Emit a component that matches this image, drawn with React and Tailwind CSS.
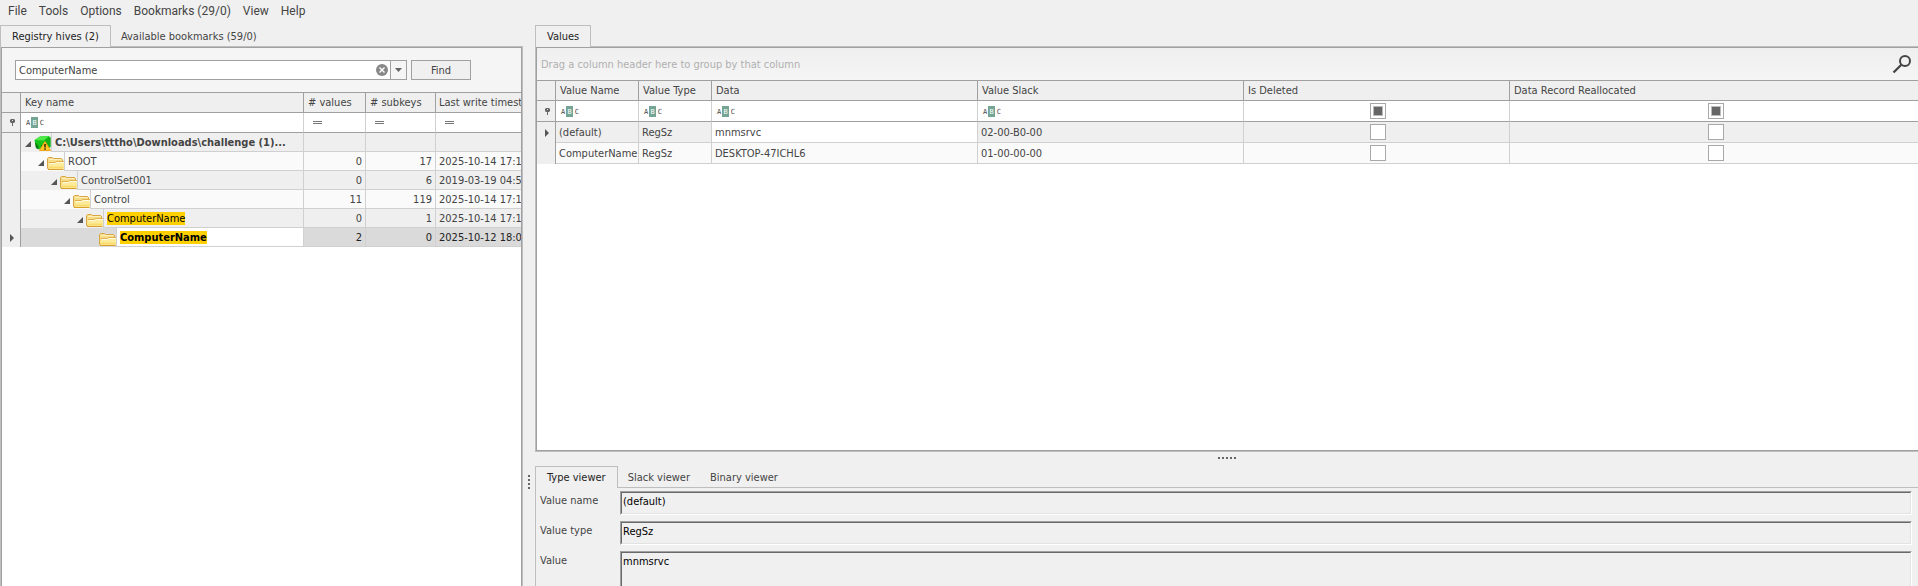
import React, { useEffect, useRef } from "react";

const treeRows = [
  { name: "C:\\Users\\tttho\\Downloads\\challenge (1)...", indent: "w-0", values: "", subkeys: "", time: "", icon: "hive", bold: true },
  { name: "ROOT", indent: "w-[13px]", values: "0", subkeys: "17", time: "2025-10-14 17:11:05", icon: "folder" },
  { name: "ControlSet001", indent: "w-[26px]", values: "0", subkeys: "6", time: "2019-03-19 04:52:10", icon: "folder" },
  { name: "Control", indent: "w-[39px]", values: "11", subkeys: "119", time: "2025-10-14 17:11:05", icon: "folder" },
  { name: "ComputerName", indent: "w-[52px]", values: "0", subkeys: "1", time: "2025-10-14 17:11:05", icon: "folder", hit: true },
  { name: "ComputerName", indent: "w-[65px]", values: "2", subkeys: "0", time: "2025-10-12 18:04:41", icon: "folder", hit: true, bold: true, selected: true, leaf: true },
];

const valueRows = [
  { name: "(default)", type: "RegSz", data: "mnmsrvc", slack: "02-00-B0-00", selected: true },
  { name: "ComputerName", type: "RegSz", data: "DESKTOP-47ICHL6", slack: "01-00-00-00" },
];

function Folder() {
  return (
    <svg className="block shrink-0" width="17" height="14" viewBox="0 0 17 14" aria-hidden="true">
      <path d="M0.5 12.5V2.5L1.5 1.5H5.5L6.5 2.5H14.5L15.5 3.5V12.5Z" fill="#f6dc86" stroke="#d8a545" />
      <path d="M2 3.5H14" stroke="#fdeebb" />
      <path d="M2 6.5H8.5L9.5 5.5H17V12L16 13.5H1.5Z" fill="#fdeb9c" />
      <path d="M2 6.5H8.5L9.5 5.5H17" stroke="#e0b050" fill="none" />
      <path d="M3 7.5H9L10 6.5H17" stroke="#fffbe0" fill="none" />
      <path d="M2 11.5H16.5" stroke="#fadb6e" strokeWidth="2" />
      <path d="M1 13.5H16.5" stroke="#d8a030" />
    </svg>
  );
}

function Hive() {
  return (
    <svg className="block shrink-0" width="17" height="15" viewBox="0 0 17 15" aria-hidden="true">
      <path d="M0.5 4L6 0.5L15 0L16.5 2V11L9 14.5L2 12Z" fill="#16c41a" />
      <path d="M0.5 4L6 0.5L15 0L10 4.5Z" fill="#4dea48" />
      <path d="M10 4.5L16.5 1V11L10 14.5Z" fill="#12b018" />
      <path d="M1 6L2 12L4.5 13.5V10ZM7 9V13.5H9V9Z" fill="#077a10" />
      <path d="M11 5.5L16.5 14.5H5.5Z" fill="#ffca2a" stroke="#f2a81a" />
      <path d="M11 8V11.5M11 12.3V13.8" stroke="#2b2100" strokeWidth="1.5" />
    </svg>
  );
}

function Expander() {
  return (
    <svg className="block" width="6" height="6" viewBox="0 0 6 6" aria-hidden="true">
      <path d="M6 0V6H0Z" fill="#555" />
    </svg>
  );
}

function RowArrow() {
  return (
    <svg className="mx-auto block" width="4" height="8" viewBox="0 0 4 8" aria-hidden="true">
      <path d="M0 0L4 4L0 8Z" fill="#555" />
    </svg>
  );
}

function Pin() {
  return (
    <svg className="mx-auto block" width="5" height="7" viewBox="0 0 5 7" aria-hidden="true">
      <path d="M1 0H4L5 1V3L4 4H3V7H2V4H1L0 3V1Z" fill="#666" />
      <rect x="2" y="1" width="1" height="1" fill="#ddd" />
    </svg>
  );
}

function AbcFilter({ label }) {
  return (
    <button type="button" aria-label={label} className="ml-[5px] flex h-[11px] font-['DejaVu_Sans_Mono',monospace] text-[7px] leading-[13px] text-[#444]">
      <span className="w-[5px] text-left">A</span>
      <span className="w-[7px] bg-[#74a594] text-center text-white">B</span>
      <span className="w-[6px] text-right">C</span>
    </button>
  );
}

function EqualsFilter({ label }) {
  return (
    <button type="button" aria-label={label} className="ml-[9px] block">
      <svg className="block" width="9" height="3" viewBox="0 0 9 3" aria-hidden="true">
        <path d="M0 0.5H9M0 2.5H9" stroke="#777" />
      </svg>
    </button>
  );
}

function Check({ label, mixed }) {
  const ref = useRef(null);
  useEffect(() => {
    ref.current.indeterminate = Boolean(mixed);
  }, [mixed]);
  return (
    <input
      ref={ref}
      type="checkbox"
      aria-label={label}
      className="mx-auto block size-4 appearance-none border border-[#a8a8a8] bg-white indeterminate:grid indeterminate:place-items-center indeterminate:before:size-[10px] indeterminate:before:border indeterminate:before:border-[#bbb] indeterminate:before:bg-[#666] indeterminate:before:content-['']"
    />
  );
}

function Tab({ active, children }) {
  return active ? (
    <button type="button" role="tab" aria-selected="true" className="relative z-10 -mb-px h-[22px] border border-b-0 border-[#bebebe] bg-[#f0f0f0] px-[11px] text-[#222]">
      {children}
    </button>
  ) : (
    <button type="button" role="tab" aria-selected="false" className="h-[21px] px-[10px] pt-px">
      {children}
    </button>
  );
}

const head = "h-5 border-r border-b border-[#a0a0a0] bg-[#efefef] px-1 pb-px text-left font-normal";
const gutter = "border-r border-[#a0a0a0] bg-[#efefef] p-0 pl-[2px]";

function Tree() {
  return (
    <table className="w-[620px] table-fixed border-separate border-spacing-0 border-t border-[#a0a0a0]">
      <colgroup>
        <col className="w-[19px]" />
        <col className="w-[283px]" />
        <col className="w-[62px]" />
        <col className="w-[70px]" />
        <col />
      </colgroup>
      <thead>
        <tr>
          <th className={head} aria-label="Row state" />
          <th className={head}>Key name</th>
          <th className={head}># values</th>
          <th className={head}># subkeys</th>
          <th className={head + " pl-[3px]"}>Last write timestamp</th>
        </tr>
        <tr>
          <td className={gutter + " h-5 border-b"}><Pin /></td>
          <td className="border-r border-b border-r-[#d0d0d0] border-b-[#a0a0a0] p-0"><AbcFilter label="Filter key name" /></td>
          <td className="border-r border-b border-r-[#d0d0d0] border-b-[#a0a0a0] p-0"><EqualsFilter label="Filter values" /></td>
          <td className="border-r border-b border-r-[#d0d0d0] border-b-[#a0a0a0] p-0"><EqualsFilter label="Filter subkeys" /></td>
          <td className="border-b border-[#a0a0a0] p-0"><EqualsFilter label="Filter timestamp" /></td>
        </tr>
      </thead>
      <tbody>
        {treeRows.map((r, i) => (
          <tr key={i} className={r.selected ? "bg-[#dadada] text-[#222]" : i % 2 ? "bg-[#fafafa]" : "bg-[#efefef]"}>
            <td className={gutter}>{r.selected && <RowArrow />}</td>
            <td className="border-r border-[#d0d0d0] p-0">
              <div className="flex h-[19px]">
                <div className={r.indent + " shrink-0"} />
                <div className="flex w-[13px] shrink-0 items-center justify-end pr-[3px] pt-[2px]">{!r.leaf && <Expander />}</div>
                <div className="flex shrink-0 items-end pb-px">{r.icon === "hive" ? <Hive /> : <Folder />}</div>
                <div className={"flex min-w-0 flex-1 items-center border-b border-l border-[#d0d0d0] pl-[3px] whitespace-nowrap " + (r.selected ? "bg-white" : "")}>
                  <span className={(r.hit ? "bg-[#ffd000] text-black " : "") + (r.bold ? "font-bold" : "")}>{r.name}</span>
                </div>
              </div>
            </td>
            <td className="border-r border-b border-[#d0d0d0] px-[3px] py-0 text-right">{r.values}</td>
            <td className="border-r border-b border-[#d0d0d0] px-[3px] py-0 text-right">{r.subkeys}</td>
            <td className="border-b border-[#d0d0d0] px-[3px] py-0 whitespace-nowrap">{r.time}</td>
          </tr>
        ))}
      </tbody>
    </table>
  );
}

function ValuesGrid() {
  const filterCell = "border-r border-b border-r-[#d0d0d0] border-b-[#a0a0a0] p-0";
  const cell = "h-[21px] border-r border-b border-[#d0d0d0] px-[3px] py-0";
  return (
    <table className="w-full table-fixed border-separate border-spacing-0 border-t border-[#a0a0a0]">
      <colgroup>
        <col className="w-[19px]" />
        <col className="w-[83px]" />
        <col className="w-[73px]" />
        <col className="w-[266px]" />
        <col className="w-[266px]" />
        <col className="w-[266px]" />
        <col />
      </colgroup>
      <thead>
        <tr>
          <th className={head} aria-label="Row state" />
          <th className={head}>Value Name</th>
          <th className={head}>Value Type</th>
          <th className={head}>Data</th>
          <th className={head}>Value Slack</th>
          <th className={head}>Is Deleted</th>
          <th className={head + " border-r-0"}>Data Record Reallocated</th>
        </tr>
        <tr>
          <td className={gutter + " h-[21px] border-b"}><Pin /></td>
          <td className={filterCell}><AbcFilter label="Filter value name" /></td>
          <td className={filterCell}><AbcFilter label="Filter value type" /></td>
          <td className={filterCell}><AbcFilter label="Filter data" /></td>
          <td className={filterCell}><AbcFilter label="Filter value slack" /></td>
          <td className={filterCell + " pl-[3px]"}><Check label="Filter is deleted" mixed /></td>
          <td className="border-b border-[#a0a0a0] p-0 pl-[3px]"><Check label="Filter data record reallocated" mixed /></td>
        </tr>
      </thead>
      <tbody>
        {valueRows.map((r) => (
          <tr key={r.name} className={r.selected ? "bg-[#efefef]" : "bg-[#fafafa]"}>
            <td className={gutter}>{r.selected && <RowArrow />}</td>
            <td className={cell}>{r.name}</td>
            <td className={cell}>{r.type}</td>
            <td className={cell + (r.selected ? " bg-white" : "")}>{r.data}</td>
            <td className={cell}>{r.slack}</td>
            <td className="border-r border-b border-[#d0d0d0] p-0 pl-[3px]"><Check label={r.name + " is deleted"} /></td>
            <td className="border-b border-[#d0d0d0] p-0 pl-[3px]"><Check label={r.name + " data record reallocated"} /></td>
          </tr>
        ))}
      </tbody>
    </table>
  );
}

const sunken = "min-w-0 flex-1 border border-t-[#a0a0a0] border-r-white border-b-white border-l-[#a0a0a0]";
const sunkenInner = "block w-full border border-t-[#696969] border-r-[#e3e3e3] border-b-[#e3e3e3] border-l-[#696969] bg-[#f0f0f0] pl-px text-black outline-none";

export default function App() {
  return (
    <div className="flex h-screen flex-col overflow-hidden bg-[#f0f0f0] font-['DejaVu_Sans_Condensed','DejaVu_Sans',sans-serif] text-[11px] leading-[13px] text-[#444]">
      <nav className="flex h-[25px] shrink-0 items-start gap-3 pt-[3px] pl-2 font-[Roboto,sans-serif] text-[12px] leading-4">
        {["File", "Tools", "Options", "Bookmarks (29/0)", "View", "Help"].map((m) => (
          <button key={m} type="button">{m}</button>
        ))}
      </nav>

      <div className="flex min-h-0 flex-1">
        <section className="flex w-[523px] shrink-0 flex-col">
          <div role="tablist" className="flex">
            <Tab active>Registry hives (2)</Tab>
            <Tab>Available bookmarks (59/0)</Tab>
          </div>
          <div className="min-h-0 flex-1 border border-b-0 border-[#bebebe]">
            <div className="h-full overflow-hidden border border-b-0 border-[#a0a0a0] bg-white">
              <div className="flex h-11 items-center gap-1 bg-[#f5f5f5] pl-[13px]">
                <div className="flex h-5 w-[392px] border border-[#a0a0a0] bg-white">
                  <input aria-label="Search keys" defaultValue="ComputerName" className="min-w-0 flex-1 bg-white pl-[3px] outline-none" />
                  <button type="button" aria-label="Clear" className="px-[2px]">
                    <svg className="block" width="12" height="12" viewBox="0 0 12 12" aria-hidden="true">
                      <circle cx="6" cy="6" r="6" fill="#888" />
                      <path d="M3.5 3.5L8.5 8.5M8.5 3.5L3.5 8.5" stroke="#fff" strokeWidth="1.4" />
                    </svg>
                  </button>
                  <button type="button" aria-label="History" className="flex w-4 items-center justify-center border-l border-[#a0a0a0] bg-[#f5f5f5]">
                    <svg className="block" width="7" height="4" viewBox="0 0 7 4" aria-hidden="true">
                      <path d="M0 0H7L3.5 4Z" fill="#666" />
                    </svg>
                  </button>
                </div>
                <button type="button" className="h-5 w-[60px] border border-[#a0a0a0] bg-[#f0f0f0]">Find</button>
              </div>
              <Tree />
            </div>
          </div>
        </section>

        <div className="flex w-3 shrink-0 flex-col items-center gap-[2px] pt-[450px]" role="separator" aria-orientation="vertical">
          {[0, 1, 2, 3].map((d) => (
            <span key={d} className="size-[2px] bg-[#666]" />
          ))}
        </div>

        <div className="flex min-w-0 flex-1 flex-col">
          <section className="flex min-h-0 flex-1 flex-col">
            <div role="tablist" className="flex">
              <Tab active>Values</Tab>
            </div>
            <div className="min-h-0 flex-1 border border-r-0 border-[#bebebe]">
              <div className="h-full overflow-hidden border border-r-0 border-[#a0a0a0] bg-white">
                <div className="flex h-8 items-center justify-between bg-linear-to-b from-[#efefef] to-[#f5f5f5] pr-[6px] pl-1 text-[#b0b0b0]">
                  <span>Drag a column header here to group by that column</span>
                  <button type="button" aria-label="Search">
                    <svg className="block" width="20" height="20" viewBox="0 0 20 20" fill="none" stroke="#444" aria-hidden="true">
                      <circle cx="13" cy="7" r="5" strokeWidth="2" />
                      <path d="M9.3 10.7L1.5 18.5" strokeWidth="2.2" />
                    </svg>
                  </button>
                </div>
                <ValuesGrid />
              </div>
            </div>
          </section>

          <div className="flex h-[14px] shrink-0 justify-center gap-[2px] pt-[5px]" role="separator">
            {[0, 1, 2, 3, 4].map((d) => (
              <span key={d} className="size-[2px] bg-[#666]" />
            ))}
          </div>

          <section className="flex h-[120px] shrink-0 flex-col overflow-hidden">
            <div role="tablist" className="flex">
              <Tab active>Type viewer</Tab>
              <Tab>Slack viewer</Tab>
              <Tab>Binary viewer</Tab>
            </div>
            <div className="flex flex-col gap-[6px] border-t border-l border-[#bebebe] pt-[3px] pr-[6px] pl-1">
              <div className="flex h-6">
                <label htmlFor="vname" className="w-20 pt-[3px]">Value name</label>
                <div className={sunken}><input id="vname" readOnly defaultValue="(default)" className={sunkenInner + " h-[22px] pb-1"} /></div>
              </div>
              <div className="flex h-6">
                <label htmlFor="vtype" className="w-20 pt-[3px]">Value type</label>
                <div className={sunken}><input id="vtype" readOnly defaultValue="RegSz" className={sunkenInner + " h-[22px] pb-1"} /></div>
              </div>
              <div className="flex h-16">
                <label htmlFor="vdata" className="w-20 pt-[3px]">Value</label>
                <div className={sunken}><textarea id="vdata" readOnly defaultValue="mnmsrvc" className={sunkenInner + " h-[62px] resize-none pt-[2px]"} /></div>
              </div>
            </div>
          </section>
        </div>
      </div>
    </div>
  );
}
